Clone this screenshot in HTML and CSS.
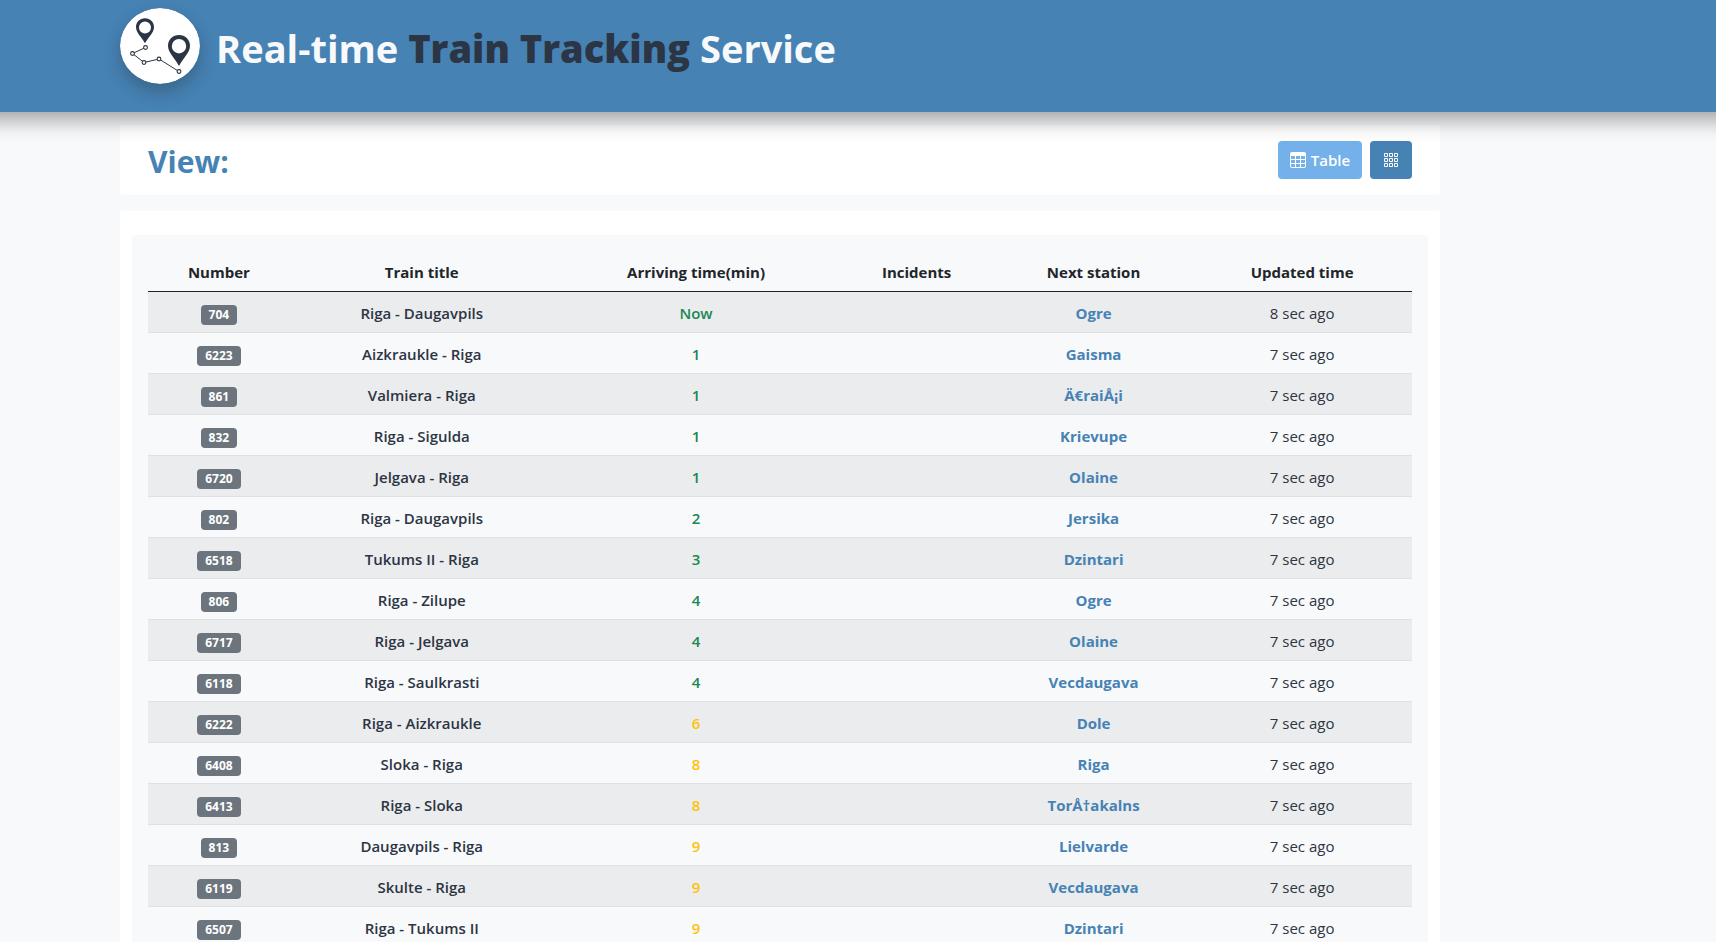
FILE: index.html
```
<!DOCTYPE html>
<html lang="en">
<head>
<meta charset="utf-8">
<title>Real-time Train Tracking Service</title>
<link rel="stylesheet" href="styles.css">
</head>
<body>
<header class="site-header">
  <svg class="logo" viewBox="0 0 80 76" role="img" aria-label="Logo">
    <ellipse cx="40" cy="38" rx="40" ry="38" fill="#fff"/>
    <g fill="#2c3543" fill-rule="evenodd">
      <path d="M25 10.200c-5.100 0-9 3.900-9 8.800 0 5.500 5 9.500 9 16.200 4-6.700 9-10.700 9-16.200 0-4.900-3.900-8.800-9-8.800zm0 3.200a6 6 0 1 1 0 12 6 6 0 0 1 0-12z"/>
      <path d="M59 27c-6.200 0-11 4.700-11 10.700 0 7 6.500 11.800 11 20.300 4.500-8.500 11-13.300 11-20.300 0-6-4.800-10.700-11-10.700zm0 4a7.200 7.200 0 1 1 0 14.400 7.200 7.200 0 0 1 0-14.400z"/>
    </g>
    <path d="M25.500 39.500 12.500 45.500 24 54.500 39 51 59 63.500" fill="none" stroke="#2c3543" stroke-width="1"/>
    <g fill="#fff" stroke="#2c3543" stroke-width="1.100">
      <circle cx="25.500" cy="39.500" r="1.900"/><circle cx="12.500" cy="45.500" r="1.900"/><circle cx="24" cy="54.500" r="1.900"/><circle cx="39" cy="51" r="1.900"/><circle cx="59" cy="63.500" r="1.900"/>
    </g>
  </svg>
  <h1 class="site-title">Real-time <span class="accent">Train Tracking</span> Service</h1>
</header>
<main class="page">
  <section class="card toolbar">
    <h2 class="toolbar-title">View:</h2>
    <div class="actions">
      <button class="btn btn-active" type="button">
        <svg class="icon" viewBox="0 0 16 16" fill="currentColor" aria-hidden="true"><path d="M0 2a2 2 0 0 1 2-2h12a2 2 0 0 1 2 2v12a2 2 0 0 1-2 2H2a2 2 0 0 1-2-2V2zm15 2h-4v3h4V4zm0 4h-4v3h4V8zm0 4h-4v3h3a1 1 0 0 0 1-1v-2zm-5 3v-3H6v3h4zm-5 0v-3H1v2a1 1 0 0 0 1 1h3zm-4-4h4V8H1v3zm0-4h4V4H1v3zm5-3v3h4V4H6zm4 4H6v3h4V8z"/></svg>
        Table
      </button>
      <button class="btn" type="button" aria-label="Grid">
        <svg class="icon" viewBox="0 0 16 16" fill="none" stroke="currentColor" aria-hidden="true"><path d="M1.500 1.500h3v3h-3zM6.500 1.500h3v3h-3zM11.500 1.500h3v3h-3zM1.500 6.500h3v3h-3zM6.500 6.500h3v3h-3zM11.500 6.500h3v3h-3zM1.500 11.500h3v3h-3zM6.500 11.500h3v3h-3zM11.500 11.500h3v3h-3z"/></svg>
      </button>
    </div>
  </section>
  <section class="card board">
    <div class="panel">
      <table class="trains">
        <colgroup><col class="c-number"><col class="c-title"><col class="c-arriving"><col class="c-incidents"><col class="c-station"><col></colgroup>
        <thead>
          <tr><th>Number</th><th>Train title</th><th>Arriving time(min)</th><th>Incidents</th><th>Next station</th><th>Updated time</th></tr>
        </thead>
        <tbody>
          <tr><td><span class="badge">704</span></td><td class="title">Riga - Daugavpils</td><td class="soon">Now</td><td></td><td class="station">Ogre</td><td>8 sec ago</td></tr>
          <tr><td><span class="badge">6223</span></td><td class="title">Aizkraukle - Riga</td><td class="soon">1</td><td></td><td class="station">Gaisma</td><td>7 sec ago</td></tr>
          <tr><td><span class="badge">861</span></td><td class="title">Valmiera - Riga</td><td class="soon">1</td><td></td><td class="station">Ä€raiÅ¡i</td><td>7 sec ago</td></tr>
          <tr><td><span class="badge">832</span></td><td class="title">Riga - Sigulda</td><td class="soon">1</td><td></td><td class="station">Krievupe</td><td>7 sec ago</td></tr>
          <tr><td><span class="badge">6720</span></td><td class="title">Jelgava - Riga</td><td class="soon">1</td><td></td><td class="station">Olaine</td><td>7 sec ago</td></tr>
          <tr><td><span class="badge">802</span></td><td class="title">Riga - Daugavpils</td><td class="soon">2</td><td></td><td class="station">Jersika</td><td>7 sec ago</td></tr>
          <tr><td><span class="badge">6518</span></td><td class="title">Tukums II - Riga</td><td class="soon">3</td><td></td><td class="station">Dzintari</td><td>7 sec ago</td></tr>
          <tr><td><span class="badge">806</span></td><td class="title">Riga - Zilupe</td><td class="soon">4</td><td></td><td class="station">Ogre</td><td>7 sec ago</td></tr>
          <tr><td><span class="badge">6717</span></td><td class="title">Riga - Jelgava</td><td class="soon">4</td><td></td><td class="station">Olaine</td><td>7 sec ago</td></tr>
          <tr><td><span class="badge">6118</span></td><td class="title">Riga - Saulkrasti</td><td class="soon">4</td><td></td><td class="station">Vecdaugava</td><td>7 sec ago</td></tr>
          <tr><td><span class="badge">6222</span></td><td class="title">Riga - Aizkraukle</td><td class="later">6</td><td></td><td class="station">Dole</td><td>7 sec ago</td></tr>
          <tr><td><span class="badge">6408</span></td><td class="title">Sloka - Riga</td><td class="later">8</td><td></td><td class="station">Riga</td><td>7 sec ago</td></tr>
          <tr><td><span class="badge">6413</span></td><td class="title">Riga - Sloka</td><td class="later">8</td><td></td><td class="station">TorÅ†akalns</td><td>7 sec ago</td></tr>
          <tr><td><span class="badge">813</span></td><td class="title">Daugavpils - Riga</td><td class="later">9</td><td></td><td class="station">Lielvarde</td><td>7 sec ago</td></tr>
          <tr><td><span class="badge">6119</span></td><td class="title">Skulte - Riga</td><td class="later">9</td><td></td><td class="station">Vecdaugava</td><td>7 sec ago</td></tr>
          <tr><td><span class="badge">6507</span></td><td class="title">Riga - Tukums II</td><td class="later">9</td><td></td><td class="station">Dzintari</td><td>7 sec ago</td></tr>
        </tbody>
      </table>
    </div>
  </section>
</main>
</body>
</html>
```
FILE: styles.css
```
* { box-sizing: border-box; }

body {
  margin: 0;
  background: #f8f9fb;
  color: #212529;
  font-family: "Segoe UI", "Open Sans", "Noto Sans", sans-serif;
  font-size: 15px;
  line-height: 24px;
}

h1, h2 { margin: 0; }

.site-header {
  position: relative;
  z-index: 1;
  display: flex;
  align-items: center;
  gap: 16px;
  padding: 8px 7% 28px;
  background: #4682b4;
  box-shadow: 0 -12px 20px 20px rgba(0, 0, 0, .36);
}

.logo {
  flex: none;
  width: 80px;
  height: 76px;
  border-radius: 50%;
  box-shadow: 0 8px 16px rgba(33, 37, 41, .3);
}

.site-title {
  padding-top: 4px;
  color: #f8f9fb;
  font-size: 38px;
  font-weight: 700;
  line-height: 48px;
}

.accent { color: #2c3543; font-weight: 800; }

.page {
  max-width: 1320px;
  margin: 13px 0 0 7%;
}

.card {
  background: #fff;
  border-radius: 4px;
}

.toolbar {
  display: flex;
  align-items: center;
  justify-content: space-between;
  padding: 16px 28px;
  margin-bottom: 16px;
}

.toolbar-title {
  padding-top: 4px;
  color: #4682b4;
  font-size: 30px;
  font-weight: 700;
  line-height: 34px;
}

.actions { display: flex; gap: 8px; }

.btn {
  display: flex;
  align-items: center;
  gap: 5px;
  height: 38px;
  padding: 0 13px;
  border: 0;
  border-radius: 4px;
  background: #4682b4;
  color: #fff;
  font: inherit;
  font-weight: 600;
}

.btn-active {
  padding: 0 12px;
  background: #74b1ea;
}

.icon { width: 16px; height: 16px; }

.board { padding: 24px 12px; }

.panel {
  padding: 16px;
  border-radius: 4px;
  background: #f8f9fb;
}

.trains {
  width: 100%;
  table-layout: fixed;
  border-collapse: separate;
  border-spacing: 0;
  text-align: center;
}

.c-number { width: 11.200%; }
.c-title { width: 20.900%; }
.c-arriving { width: 22.500%; }
.c-incidents { width: 12.400%; }
.c-station { width: 15.600%; }

.trains th,
.trains td {
  height: 41px;
  padding: 9px 8px 7px;
  border-bottom: 1px solid #dee0e3;
}

.trains th {
  border-bottom-color: #212529;
  font-weight: 700;
}

.trains tbody tr:nth-child(odd) { background: #ebeced; }

.trains td { color: #2c3543; }
.trains .title { font-weight: 600; }
.trains .soon { color: #198754; font-weight: 600; }
.trains .later { color: #ffc107; font-weight: 600; }
.trains .station { color: #4682b4; font-weight: 700; }

.badge {
  display: inline-block;
  padding: 4px 8px;
  border-radius: 4px;
  background: #6c757d;
  color: #fff;
  font-size: 12px;
  font-weight: 700;
  line-height: 12px;
}
```
